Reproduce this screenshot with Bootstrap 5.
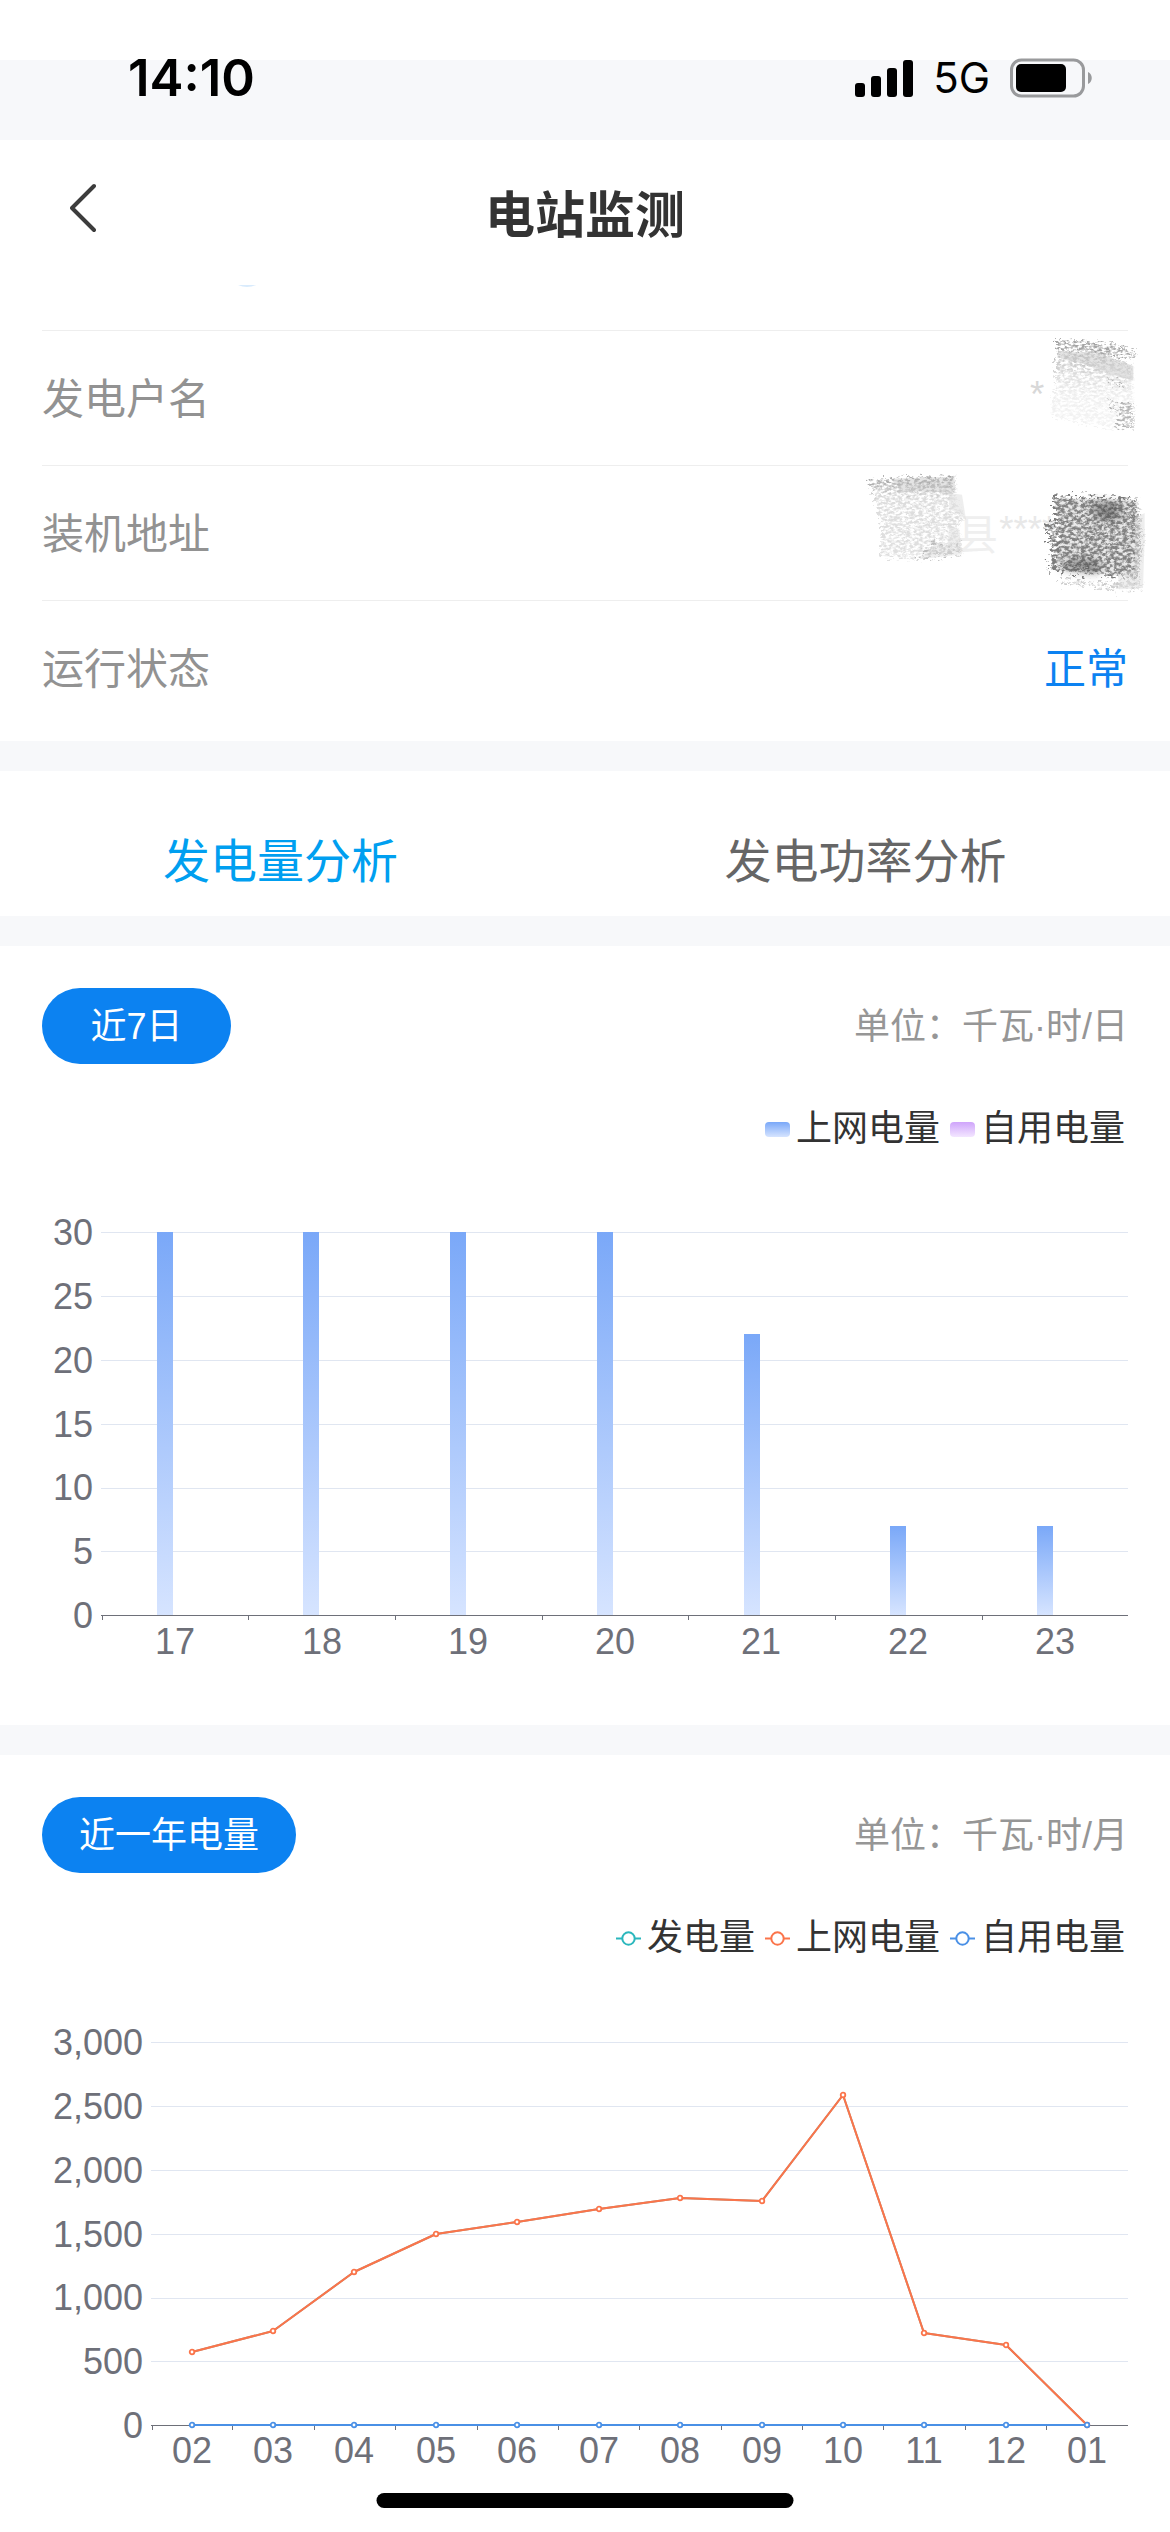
<!DOCTYPE html>
<html lang="zh-CN">
<head>
<meta charset="utf-8">
<meta name="viewport" content="width=device-width, initial-scale=1">
<title>电站监测</title>
<link href="https://cdn.jsdelivr.net/npm/bootstrap@5.3.0/dist/css/bootstrap.min.css" rel="stylesheet">
<style>
  body { font-family: "Liberation Sans", "Noto Sans CJK SC", sans-serif; color: #333; background: #fff; }
  .status-bar { height: 140px; padding: 58px 77px 0 128px; background: linear-gradient(#fff 60px, #f7f8fa 60px); font-family: Inter, sans-serif; color: #000; line-height: 40px; }
  .status-time { font-size: 51px; font-weight: 600; }
  .status-net { font-size: 42px; }
  .status-icons { gap: 20px; }
  .app-header { height: 145px; }
  .header-side { width: 120px; }
  .back-btn { padding: 0 0 10px 70px; }
  .app-title { padding-top: 6px; font-size: 50px; font-weight: 700; line-height: 60px; }
  .scroll-rest { height: 45px; }
  .side-pad { padding-left: 42px; padding-right: 42px; }
  .info-list { padding-bottom: 6px; }
  .info-line { height: 135px; padding-top: 3px; border-top: 1px solid #eee; font-size: 42px; line-height: 60px; }
  .info-line dt { color: #929292; font-weight: 400; }
  .state-ok { color: #0c82f1; }
  .erased { top: 0; right: -22px; width: 290px; height: 270px; }
  .strip { height: 30px; background: #f7f8fa; }
  .tab-row { height: 145px; }
  .tab-btn { border: 0; background: none; padding: 36px 24px 0 0; font-size: 47px; line-height: 60px; color: #666; }
  .tab-btn.active { color: #009ff0; }
  .panel { padding-top: 42px; }
  .range-btn { height: 76px; min-width: 189px; padding: 2px 37px 0; border: 0; border-radius: 38px; background: #0c82f1; color: #fff; font-size: 36px; line-height: 74px; }
  .unit-text { padding-top: 2px; font-size: 36px; color: #969696; }
  .key-row { margin-top: 38px; height: 54px; gap: 10px; padding-right: 3px; font-size: 36px; line-height: 54px; }
  .key-item { gap: 6px; }
  .swatch { width: 25px; height: 15px; border-radius: 4px; }
  .swatch-grid { background: linear-gradient(#7aa8f8, #d6e4ff); }
  .swatch-own { background: linear-gradient(#cfa4fb, #f3e6ff); }
  .plot { display: block; width: 100%; height: auto; font-size: 36px; fill: #6e7079; }
  .rules { stroke: #e0e6f1; shape-rendering: crispEdges; }
  .base { stroke: #6e7079; fill: none; shape-rendering: crispEdges; }
  .home-bar { width: 417px; height: 15px; bottom: 24px; left: 50%; transform: translateX(-50%); border-radius: 8px; background: #000; }
</style>
<script src="https://cdn.jsdelivr.net/npm/bootstrap@5.3.0/dist/js/bootstrap.bundle.min.js"></script>
</head>
<body>
<div class="status-bar d-flex justify-content-between align-items-start">
  <span class="status-time">14:10</span>
  <div class="status-icons d-flex align-items-center">
    <svg width="58" height="38" viewBox="0 0 58 38" aria-hidden="true"><rect x="0" y="24" width="10" height="14" rx="3"/><rect x="16" y="17" width="10" height="21" rx="3"/><rect x="32" y="9" width="10" height="29" rx="3"/><rect x="48" y="1" width="10" height="37" rx="3"/></svg>
    <span class="status-net">5G</span>
    <svg width="83" height="40" viewBox="0 0 83 40" aria-hidden="true"><rect x="1.5" y="2" width="72" height="36" rx="10" fill="none" stroke="#999a9c" stroke-width="3"/><rect x="6" y="6" width="50" height="28" rx="5"/><path d="M78 14c5 2 5 10 0 12z" fill="#999a9c"/></svg>
  </div>
</div>

<header class="app-header d-flex align-items-center">
  <div class="header-side"><a href="#" class="back-btn d-block" aria-label="返回"><svg width="26" height="50" viewBox="0 0 26 50" fill="none" stroke="#3c3c3c" stroke-width="4" stroke-linecap="round" stroke-linejoin="round"><path d="M24 3L2 25l22 22"/></svg></a></div>
  <h1 class="app-title flex-fill text-center mb-0">电站监测</h1>
  <div class="header-side"></div>
</header>

<main>
  <div class="scroll-rest"><svg class="d-block" width="270" height="3" aria-hidden="true"><path d="M238 0h18q-9 4-18 0z" fill="#d9ebfc"/></svg></div>
  <section class="side-pad info-list">
    <dl class="position-relative m-0">
      <div class="info-line d-flex justify-content-between align-items-center"><dt>发电户名</dt><dd class="m-0"></dd></div>
      <div class="info-line d-flex justify-content-between align-items-center"><dt>装机地址</dt><dd class="m-0"></dd></div>
      <div class="info-line d-flex justify-content-between align-items-center"><dt>运行状态</dt><dd class="m-0 state-ok">正常</dd></div>
      <svg class="erased position-absolute" viewBox="174 26 870 810" aria-hidden="true">
        <defs>
          <filter id="grainLight" x="-10%" y="-10%" width="120%" height="120%">
            <feTurbulence type="fractalNoise" baseFrequency="0.08 0.14" numOctaves="4" seed="4" result="n"/>
            <feColorMatrix in="n" values="0 0 0 0 0  0 0 0 0 0  0 0 0 0 0  3.5 0 0 0 -1.25" result="m"/>
            <feDisplacementMap in="SourceGraphic" in2="n" scale="50" xChannelSelector="R" yChannelSelector="G" result="d"/>
            <feComposite in="d" in2="m" operator="in"/>
          </filter>
          <filter id="grainDark" x="-10%" y="-10%" width="120%" height="120%">
            <feTurbulence type="fractalNoise" baseFrequency="0.08 0.12" numOctaves="4" seed="9" result="n"/>
            <feColorMatrix in="n" values="0 0 0 0 0  0 0 0 0 0  0 0 0 0 0  3.5 0 0 0 -1.2" result="m"/>
            <feDisplacementMap in="SourceGraphic" in2="n" scale="60" xChannelSelector="R" yChannelSelector="G" result="d"/>
            <feComposite in="d" in2="m" operator="in"/>
          </filter>
          <filter id="soften" x="-20%" y="-20%" width="140%" height="140%"><feGaussianBlur stdDeviation="12"/></filter>
          <linearGradient id="fadeA" x2="0" y2="1"><stop offset="0" stop-color="#b4b4b4"/><stop offset=".3" stop-color="#dedede"/><stop offset=".6" stop-color="#f0f0f0"/><stop offset="1" stop-color="#f4f4f4"/></linearGradient>
          <linearGradient id="fadeB" x2="0" y2="1"><stop offset="0" stop-color="#a2a2a2"/><stop offset=".25" stop-color="#dcdcdc"/><stop offset="1" stop-color="#e0e0e0"/></linearGradient>
        </defs>
        <g fill="#d8d8d8" font-size="110"><text x="684" y="258">*</text></g>
        <g fill="#e8e8e8" font-size="110"><text x="592" y="662">****</text></g>
        <text x="462" y="686" font-size="126" fill="#efefef">县</text>
        <g filter="url(#grainLight)">
          <path d="M765 55l170 12 70 28v14l-90-6-150-25z" fill="#a5a5a5"/>
          <path d="M768 88l130 8 95 35 8 190-60 2-195-38 15-90z" fill="url(#fadeA)"/>
          <path d="M925 180l45 3v9l-45-3zM925 240h32v8h-32zM925 262h32v8h-32zM960 240l38 10v70l-50-2z" fill="#b5b5b5"/>
        </g>
        <path d="M768 90l130 8 96 36v44l-70-20-80-30-78-20z" fill="#ccc" opacity=".55"/>
        <g filter="url(#grainLight)">
          <path d="M200 475l258-10 6 60 26 70-20 20 14 80-130 18-120-5 6-90-18-80z" fill="url(#fadeB)"/>
          <path d="M350 715l50-60 25 20 55-5v28z" fill="#bbb"/>
        </g>
        <path d="M265 472l192-6 3 48-60-2-100-2z" fill="#bbb" opacity=".4"/>
        <path d="M440 515l40 5 12 75-50-35zM442 610l30 15 8 74-100 12-28 3 45-45 40 10z" fill="#ddd" opacity=".5"/>
        <g filter="url(#grainDark)">
          <path d="M755 525l250 8 20 110-15 130-80-10-190-18 10-70-20-70 35-10z" fill="#7c7c7c"/>
          <path d="M775 775l160 10 85-15v30l-70 5-175-22z" fill="#ccc"/>
        </g>
        <path d="M755 530l250 6 5 100-10 130-200-15-40-10 20-90-10-50z" fill="#999" opacity=".22"/>
        <path d="M870 540l90 8-20 55-60-15zM770 740l50-28 70 5v40z" fill="#444" opacity=".55" filter="url(#soften)"/>
        <path d="M1000 590l28-15v70l-5 155-70 4-5-40 50-20z" fill="#ddd" opacity=".5"/>
      </svg>
    </dl>
  </section>
  <div class="strip"></div>

  <nav class="tab-row row g-0">
    <button type="button" class="tab-btn active col-6 text-center">发电量分析</button>
    <button type="button" class="tab-btn col-6 text-center">发电功率分析</button>
  </nav>
  <div class="strip"></div>

  <section class="panel side-pad">
    <div class="d-flex justify-content-between align-items-center">
      <button type="button" class="range-btn">近7日</button>
      <span class="unit-text">单位：千瓦·时/日</span>
    </div>
    <div class="key-row d-flex justify-content-end">
      <span class="key-item d-flex align-items-center"><span class="swatch swatch-grid"></span>上网电量</span>
      <span class="key-item d-flex align-items-center"><span class="swatch swatch-own"></span>自用电量</span>
    </div>
    <svg class="plot" viewBox="0 0 1086 569" role="img" aria-label="近7日电量">
      <defs><linearGradient id="barFill" x2="0" y2="1"><stop offset="0" stop-color="#7aa8f8"/><stop offset="1" stop-color="#d6e4ff"/></linearGradient></defs>
      <path class="rules" d="M59 76H1086M59 140H1086M59 204H1086M59 268H1086M59 332H1086M59 395H1086"/>
      <g fill="url(#barFill)">
        <rect x="115" y="76" width="16" height="383"/><rect x="261" y="76" width="16" height="383"/><rect x="408" y="76" width="16" height="383"/><rect x="555" y="76" width="16" height="383"/><rect x="702" y="178" width="16" height="281"/><rect x="848" y="370" width="16" height="89"/><rect x="995" y="370" width="16" height="89"/>
      </g>
      <path class="base" d="M59 459H1086M60 459v5M206 459v5M353 459v5M500 459v5M646 459v5M793 459v5M940 459v5"/>
      <g text-anchor="end"><text x="51" y="89">30</text><text x="51" y="153">25</text><text x="51" y="217">20</text><text x="51" y="281">15</text><text x="51" y="344">10</text><text x="51" y="408">5</text><text x="51" y="472">0</text></g>
      <g text-anchor="middle"><text x="133" y="498">17</text><text x="280" y="498">18</text><text x="426" y="498">19</text><text x="573" y="498">20</text><text x="719" y="498">21</text><text x="866" y="498">22</text><text x="1013" y="498">23</text></g>
    </svg>
  </section>
  <div class="strip"></div>

  <section class="panel side-pad">
    <div class="d-flex justify-content-between align-items-center">
      <button type="button" class="range-btn">近一年电量</button>
      <span class="unit-text">单位：千瓦·时/月</span>
    </div>
    <div class="key-row d-flex justify-content-end">
      <span class="key-item d-flex align-items-center"><svg width="25" height="15" fill="#fff" stroke="#2ab7bd" stroke-width="2" aria-hidden="true"><path d="M0 7.500H25"/><circle cx="12.500" cy="7.500" r="6.200"/></svg>发电量</span>
      <span class="key-item d-flex align-items-center"><svg width="25" height="15" fill="#fff" stroke="#fb744a" stroke-width="2" aria-hidden="true"><path d="M0 7.500H25"/><circle cx="12.500" cy="7.500" r="6.200"/></svg>上网电量</span>
      <span class="key-item d-flex align-items-center"><svg width="25" height="15" fill="#fff" stroke="#4a90e6" stroke-width="2" aria-hidden="true"><path d="M0 7.500H25"/><circle cx="12.500" cy="7.500" r="6.200"/></svg>自用电量</span>
    </div>
    <svg class="plot" viewBox="0 0 1086 567" role="img" aria-label="近一年电量">
      <defs>
        <marker id="dotRed" markerUnits="userSpaceOnUse" markerWidth="8" markerHeight="8" refX="4" refY="4"><circle cx="4" cy="4" r="2.300" fill="#fff" stroke="#fb744a" stroke-width="1.800"/></marker>
        <marker id="dotBlue" markerUnits="userSpaceOnUse" markerWidth="8" markerHeight="8" refX="4" refY="4"><circle cx="4" cy="4" r="2.300" fill="#fff" stroke="#4a90e6" stroke-width="1.800"/></marker>
      </defs>
      <path class="rules" d="M109 77H1086M109 141H1086M109 205H1086M109 269H1086M109 333H1086M109 396H1086"/>
      <path class="base" d="M109 460H1086M110 460v5M190 460v5M272 460v5M353 460v5M435 460v5M516 460v5M597 460v5M679 460v5M760 460v5M841 460v5M923 460v5M1004 460v5"/>
      <g fill="none" stroke-width="2" stroke-linejoin="bevel">
        <path stroke="#9a9a8c" d="M150 387L231 366 312 307 394 269 475 257 557 244 638 233 720 236 801 130 882 368 964 380 1045 460"/>
        <path stroke="#fb744a" marker-start="url(#dotRed)" marker-mid="url(#dotRed)" marker-end="url(#dotRed)" d="M150 387L231 366 312 307 394 269 475 257 557 244 638 233 720 236 801 130 882 368 964 380 1045 460"/>
        <path stroke="#4a90e6" marker-start="url(#dotBlue)" marker-mid="url(#dotBlue)" marker-end="url(#dotBlue)" d="M150 460H231H312H394H475H557H638H720H801H882H964H1045"/>
      </g>
      <g text-anchor="end"><text x="101" y="90">3,000</text><text x="101" y="154">2,500</text><text x="101" y="218">2,000</text><text x="101" y="282">1,500</text><text x="101" y="345">1,000</text><text x="101" y="409">500</text><text x="101" y="473">0</text></g>
      <g text-anchor="middle"><text x="150" y="498">02</text><text x="231" y="498">03</text><text x="312" y="498">04</text><text x="394" y="498">05</text><text x="475" y="498">06</text><text x="557" y="498">07</text><text x="638" y="498">08</text><text x="720" y="498">09</text><text x="801" y="498">10</text><text x="882" y="498">11</text><text x="964" y="498">12</text><text x="1045" y="498">01</text></g>
    </svg>
  </section>
</main>
<div class="home-bar position-fixed"></div>
</body>
</html>
